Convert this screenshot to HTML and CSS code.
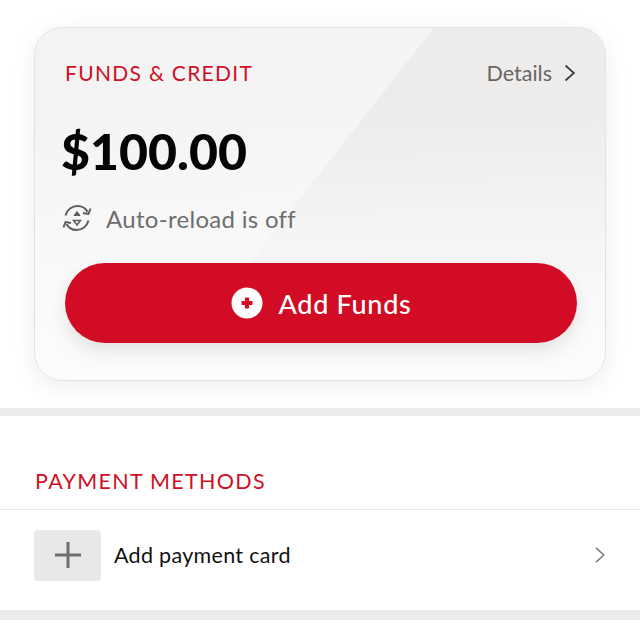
FILE: index.html
```html
<!DOCTYPE html>
<html lang="en">
<head>
<meta charset="utf-8">
<title>Funds &amp; Credit</title>
<link rel="stylesheet" href="styles.css">
</head>
<body>
<section class="funds">
  <div class="card">
    <div class="card-head">
      <h2 class="eyebrow">FUNDS &amp; CREDIT</h2>
      <a class="details">Details
        <svg class="details-chevron" viewBox="0 0 12 18" width="12" height="18"><path d="M1.5 1.5 9.9 9 1.5 16.5" fill="none" stroke="#3a3a3a" stroke-width="1.7"/></svg>
      </a>
    </div>
    <div class="amount">$100.00</div>
    <div class="reload">
      <svg class="reload-icon" viewBox="0 0 30 30" width="30" height="30" fill="none" stroke="#5f5f5f" stroke-width="2">
        <path d="M3.5 12.5C5 6.5 10 3 15.5 3c4.500 0 8 2 10 6"/>
        <path d="M26.500 17.500C25 23.500 20 27 14.500 27c-4.500 0-8-2-10-6"/>
        <path d="M28.500 5.500 26.500 11l-5.500-1" stroke-linejoin="round"/>
        <path d="M1.500 24.500 3.500 19l5.500 1" stroke-linejoin="round"/>
        <path d="M15 8.500 18 12.500H12Z" fill="#5f5f5f" stroke-width="1"/>
        <path d="M11.500 17.500H18.500L15 22Z" stroke-width="1.500"/>
      </svg>
      <span>Auto-reload is off</span>
    </div>
    <button class="add-funds" type="button">
      <svg class="plus-badge" viewBox="0 0 32 32" width="32" height="32"><circle cx="16" cy="16" r="15.500" fill="#fff"/><path d="M16 10.500v11M10.500 16h11" stroke="#d20c24" stroke-width="4.200"/></svg>
      <span>Add Funds</span>
    </button>
  </div>
</section>
<div class="band"></div>
<section class="methods">
  <h2 class="eyebrow methods-title">PAYMENT METHODS</h2>
  <div class="method-row">
    <div class="method-thumb">
      <svg viewBox="0 0 26 26" width="26" height="26"><path d="M13 0v26M0 13h26" stroke="#6f6f6f" stroke-width="3"/></svg>
    </div>
    <span class="method-label">Add payment card</span>
    <svg class="method-chevron" viewBox="0 0 10 16" width="10" height="16"><path d="M1 .9 8.800 8 1 15.100" fill="none" stroke="#7d7d7d" stroke-width="1.500"/></svg>
  </div>
</section>
<div class="band band-last"></div>
</body>
</html>
```
FILE: styles.css
```css
html, body {
  margin: 0;
  padding: 0;
  background: #fff;
}
body {
  width: 640px;
  height: 640px;
  overflow: hidden;
  font-family: "Lato", "Liberation Sans", sans-serif;
}
.funds {
  padding: 27px 34px;
}
.card {
  box-sizing: border-box;
  height: 354px;
  padding: 0 29px 0 30px;
  border: 1px solid #e3e3e1;
  border-radius: 28px;
  background:
    linear-gradient(180deg, rgba(255,255,255,0) 25%, #fbfbfb 85%),
    linear-gradient(128deg, #f4f3f3 0%, #f6f5f5 47%, #eeecea 47.300%, #efedec 100%);
  box-shadow: 0 6px 24px rgba(0,0,0,.07);
}
.card-head {
  display: flex;
  align-items: center;
  justify-content: space-between;
  height: 90px;
  padding-left: -2px;
}
.eyebrow {
  margin: 0;
  color: #cf1026;
  font-size: 21px;
  font-weight: 400;
  letter-spacing: 1.300px;
  line-height: 26px;
}
.details {
  display: flex;
  align-items: center;
  gap: 12px;
  color: #666;
  font-size: 21.500px;
}
.details-chevron {
  display: block;
}
.amount {
  margin: 3px 0 0 -4px;
  height: 60px;
  color: #050505;
  font-size: 50px;
  font-weight: 900;
  line-height: 60px;
}
.reload {
  display: flex;
  align-items: center;
  gap: 14px;
  height: 34px;
  margin-top: 20px;
  margin-left: -3px;
  color: #6e6e6e;
  font-size: 24px;
  letter-spacing: .3px;
}
.reload-icon {
  display: block;
}
.add-funds {
  display: flex;
  align-items: center;
  justify-content: center;
  gap: 16px;
  width: 512px;
  height: 80px;
  margin-top: 28px;
  padding: 0;
  border: 0;
  border-radius: 40px;
  background: #d20c24;
  box-shadow: 0 8px 18px rgba(0,0,0,.10);
  color: #fff;
  font: 500 27px "Lato", "Liberation Sans", sans-serif;
  letter-spacing: .7px;
}
.plus-badge {
  display: block;
}
.band {
  height: 8px;
  background: #ebebe9;
}
.band-last {
  height: 10px;
}
.methods {
  height: 194px;
}
.methods-title {
  box-sizing: border-box;
  height: 94px;
  padding: 52px 0 0 35px;
  border-bottom: 1px solid #e8e8e8;
  font-size: 21.500px;
}
.method-row {
  display: flex;
  align-items: center;
  height: 90px;
  padding: 0 34px;
}
.method-thumb {
  display: flex;
  align-items: center;
  justify-content: center;
  flex: none;
  width: 67px;
  height: 51px;
  border-radius: 4px;
  background: #e8e8e8;
}
.method-label {
  margin-left: 13px;
  color: #111;
  font-size: 21.500px;
  letter-spacing: .3px;
}
.method-chevron {
  margin-left: auto;
  margin-right: 1px;
}
```
